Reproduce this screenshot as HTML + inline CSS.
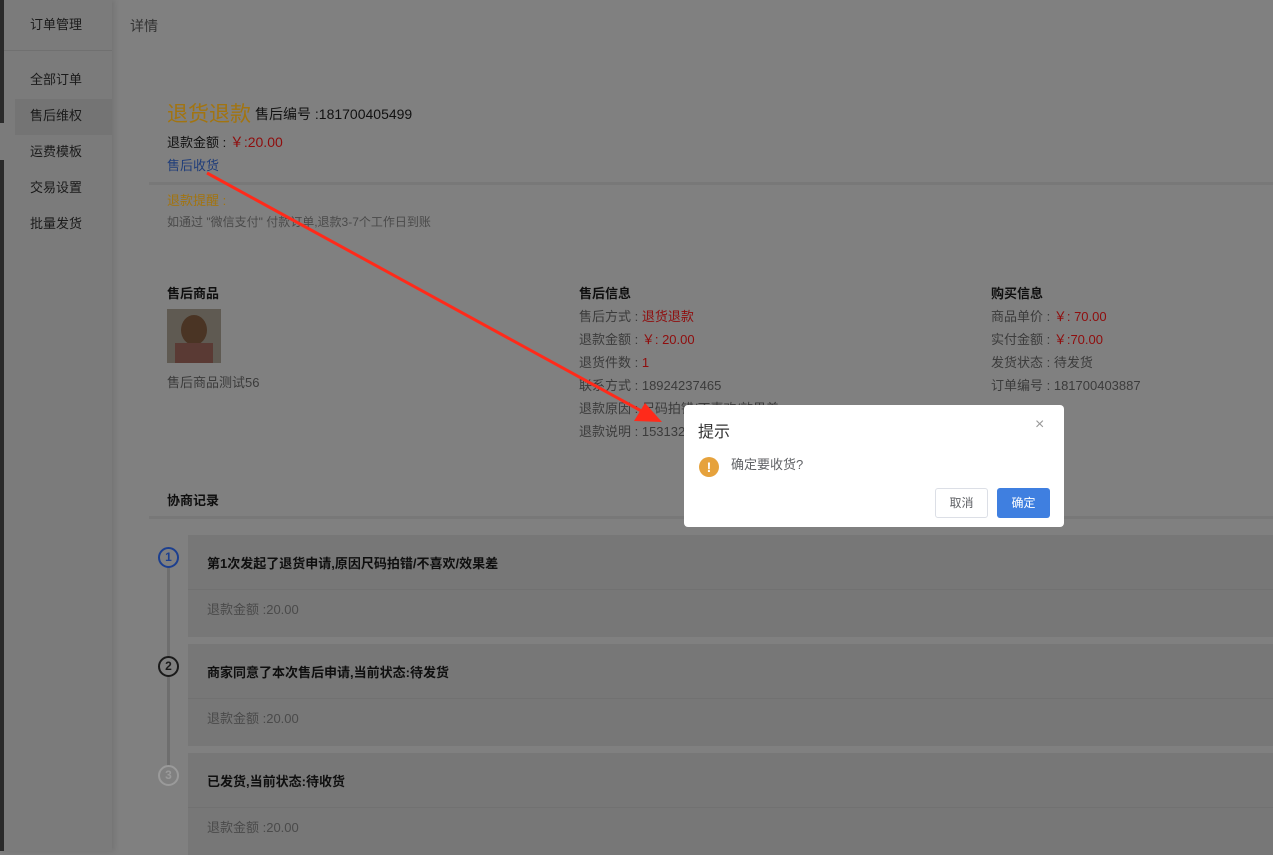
<!DOCTYPE html>
<html><head><meta charset="utf-8"><style>
*{margin:0;padding:0;box-sizing:border-box}
body{width:1273px;height:851px;overflow:hidden;position:relative;background:#808080;font-family:"Liberation Sans","Noto Sans CJK SC",sans-serif;font-size:13px;color:#111}
.abs{position:absolute;white-space:nowrap}
#side{position:absolute;left:0;top:0;width:112px;height:851px;background:#7b7b7b;box-shadow:2px 0 6px rgba(0,0,0,.12)}
.strip{position:absolute;left:0;width:4px;background:#2a2a2a}
.nav{position:absolute;left:30px;font-size:13px;color:#1a1a1a}
.gray{color:#3b3b3b}.red{color:#8f0d0d}
.card{position:absolute;left:188px;width:1085px;height:102px;background:#777}
.card .h{position:absolute;left:19px;top:18px;font-weight:bold;color:#0f0f0f;font-size:13px}
.card .ln{position:absolute;left:0;right:0;top:54px;height:1px;background:#717171}
.card .b{position:absolute;left:19px;top:64px;color:#4a4a4a;font-size:13px}
.circ{position:absolute;left:158px;width:21px;height:21px;border-radius:50%;border:2px solid;background:#808080;text-align:center;font-size:12px;line-height:17px;font-weight:bold}
#dlg{position:absolute;left:684px;top:405px;width:380px;height:122px;background:#fff;border-radius:4px}
</style></head><body>
<div id="side">
 <div class="nav" style="top:14px">订单管理</div>
 <div style="position:absolute;left:0;top:50px;width:112px;height:1px;background:#707070"></div>
 <div class="nav" style="top:69px">全部订单</div>
 <div style="position:absolute;left:15px;top:99px;width:97px;height:36px;background:#747474"></div>
 <div class="nav" style="top:105px">售后维权</div>
 <div class="nav" style="top:141px">运费模板</div>
 <div class="nav" style="top:177px">交易设置</div>
 <div class="nav" style="top:213px">批量发货</div>
</div>
<div class="strip" style="top:0;height:123px"></div><div class="strip" style="top:160px;height:691px"></div>
<div class="abs" style="left:130px;top:16px;font-size:14px;color:#333">详情</div>
<div class="abs" style="left:167px;top:98px;font-size:21px;color:#a27410">退货退款</div>
<div class="abs" style="left:255px;top:104px;font-size:14px;color:#111">售后编号 :181700405499</div>
<div class="abs" style="left:167px;top:132px;color:#111">退款金额 : <span class="red" style="font-size:14px">￥:20.00</span></div>
<div class="abs" style="left:167px;top:155px;color:#1f3d7a">售后收货</div>
<div style="position:absolute;left:149px;top:182px;width:1124px;height:3px;background:#787878"></div>
<div class="abs" style="left:167px;top:190px;color:#a27410">退款提醒 :</div>
<div class="abs" style="left:167px;top:213px;font-size:12px;color:#4a4a4a">如通过 "微信支付" 付款订单,退款3-7个工作日到账</div>

<div class="abs" style="left:167px;top:283px;font-weight:bold;color:#0f0f0f">售后商品</div>
<div style="position:absolute;left:167px;top:309px;width:54px;height:54px;background:#5f5a52"><div style="position:absolute;left:14px;top:6px;width:26px;height:30px;border-radius:50%;background:#4a3424"></div><div style="position:absolute;left:8px;top:34px;width:38px;height:20px;background:#5a3a34"></div></div>
<div class="abs gray" style="left:167px;top:372px">售后商品测试56</div>

<div class="abs" style="left:579px;top:283px;font-weight:bold;color:#0f0f0f">售后信息</div>
<div class="abs gray" style="left:579px;top:305px;line-height:23px">售后方式 : <span class="red">退货退款</span><br>退款金额 : <span class="red">￥: 20.00</span><br>退货件数 : <span class="red">1</span><br>联系方式 : 18924237465<br>退款原因 : 尺码拍错/不喜欢/效果差<br>退款说明 : 1531327</div>

<div class="abs" style="left:991px;top:283px;font-weight:bold;color:#0f0f0f">购买信息</div>
<div class="abs gray" style="left:991px;top:305px;line-height:23px">商品单价 : <span class="red">￥: 70.00</span><br>实付金额 : <span class="red">￥:70.00</span><br>发货状态 : 待发货<br>订单编号 : 181700403887</div>

<div class="abs" style="left:167px;top:490px;font-weight:bold;color:#0f0f0f">协商记录</div>
<div style="position:absolute;left:149px;top:516px;width:1124px;height:3px;background:#787878"></div>
<div style="position:absolute;left:167px;top:565px;width:3px;height:210px;background:#6e6e6e"></div>
<div class="card" style="top:535px"><div class="h">第1次发起了退货申请,原因尺码拍错/不喜欢/效果差</div><div class="ln"></div><div class="b">退款金额 :20.00</div></div>
<div class="card" style="top:644px"><div class="h">商家同意了本次售后申请,当前状态:待发货</div><div class="ln"></div><div class="b">退款金额 :20.00</div></div>
<div class="card" style="top:753px"><div class="h">已发货,当前状态:待收货</div><div class="ln"></div><div class="b">退款金额 :20.00</div></div>
<div class="circ" style="top:547px;border-color:#1c3f8f;color:#1c3f8f">1</div>
<div class="circ" style="top:656px;border-color:#1a1a1a;color:#1a1a1a">2</div>
<div class="circ" style="top:765px;border-color:#9a9a9a;color:#9a9a9a">3</div>

<svg style="position:absolute;left:0;top:0" width="1273" height="851"><line x1="207" y1="173" x2="645" y2="413" stroke="#ff2a1a" stroke-width="3"/><polygon points="662,422 634,421 645,403" fill="#ff2a1a"/></svg>
<div id="dlg">
 <div class="abs" style="left:14px;top:13px;font-size:16px;color:#333">提示</div>
 <div class="abs" style="left:351px;top:11px;font-size:16px;color:#999">×</div>
 <div style="position:absolute;left:15px;top:52px;width:20px;height:20px;border-radius:50%;background:#e6a23c;color:#fff;text-align:center;font-weight:bold;font-size:14px;line-height:20px">!</div>
 <div class="abs" style="left:47px;top:49px;font-size:13px;color:#606266">确定要收货?</div>
 <div style="position:absolute;left:251px;top:83px;width:53px;height:30px;border:1px solid #dcdfe6;border-radius:3px;text-align:center;line-height:28px;font-size:12px;color:#606266">取消</div>
 <div style="position:absolute;left:313px;top:83px;width:53px;height:30px;background:#3f7fe0;border-radius:3px;text-align:center;line-height:30px;font-size:12px;color:#fff">确定</div>
</div>
</body></html>
